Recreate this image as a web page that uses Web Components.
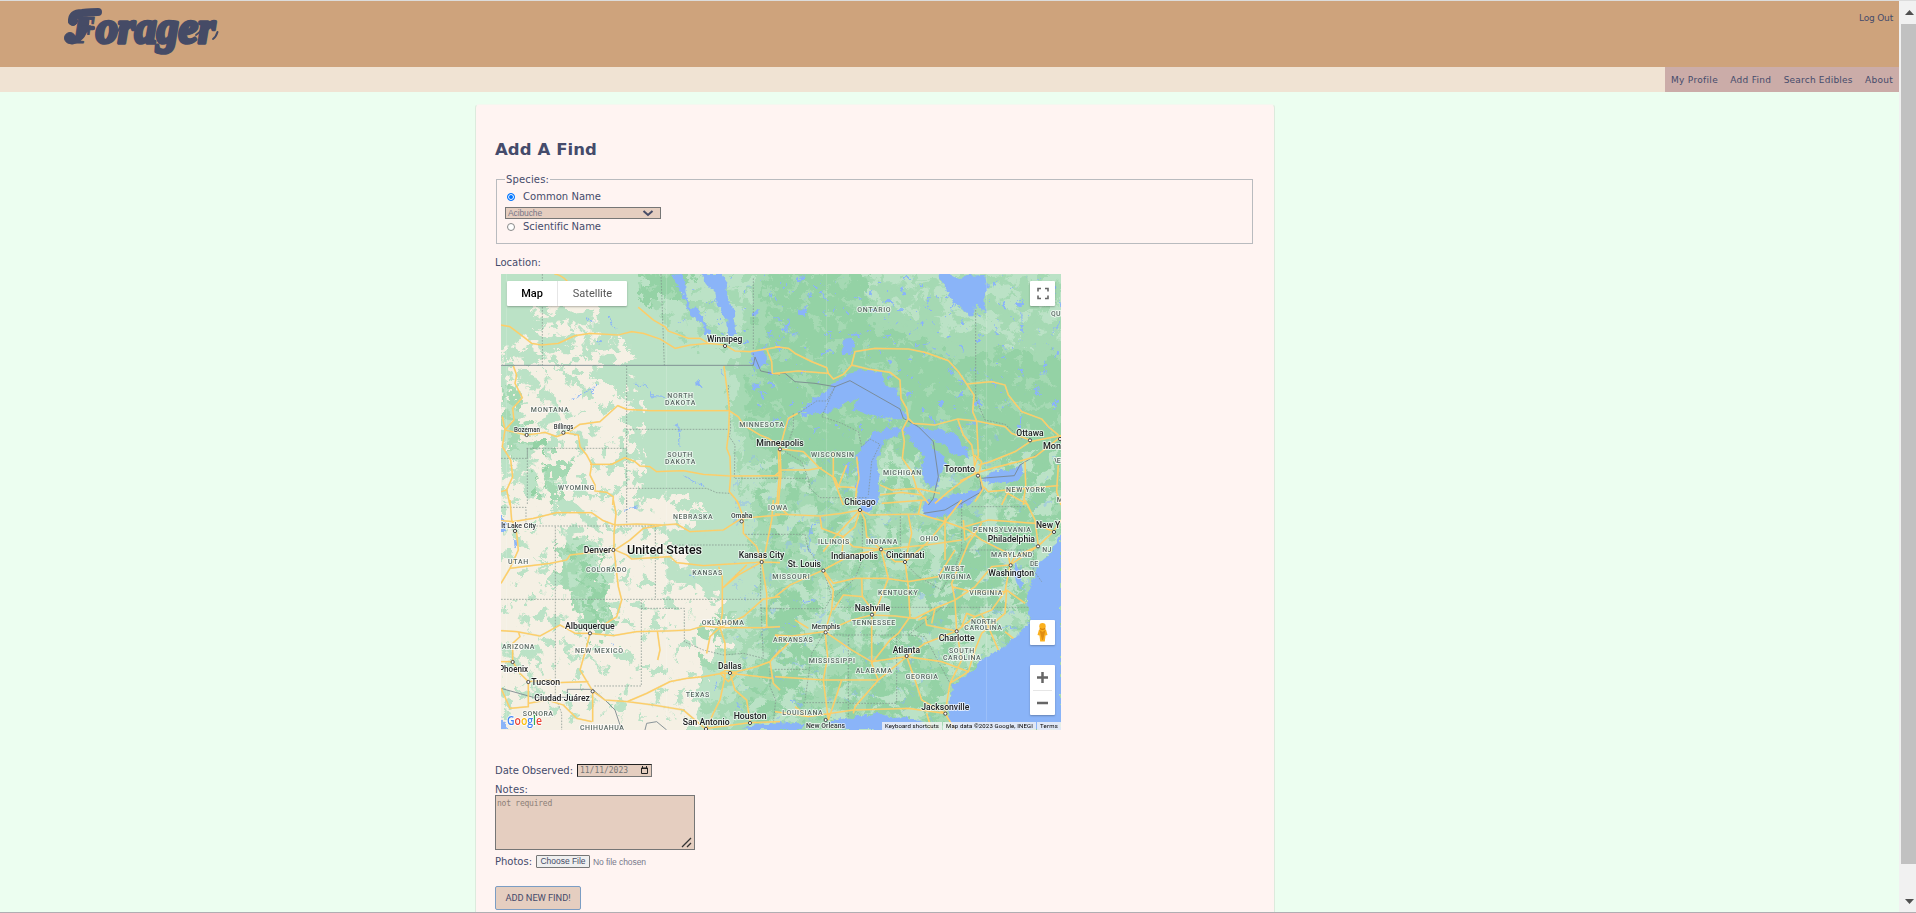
<!DOCTYPE html>
<html lang="en">
<head>
<meta charset="utf-8">
<title>Forager</title>
<style>
html,body{margin:0;height:913px;overflow:hidden;background:#ecfef0;color:#454b6b;font-family:"DejaVu Sans",Verdana,sans-serif;font-size:10px}
</style>
</head>
<body>
<forager-app></forager-app>
<script>
class FitText extends HTMLElement{
  connectedCallback(){
    const r=this.attachShadow({mode:'open'});
    r.innerHTML='<style>:host{display:inline-block;white-space:nowrap;line-height:1}</style><slot></slot>';
    const n=this.textContent.length,want=+this.getAttribute('w');
    const w=this.getBoundingClientRect().width;
    this.style.letterSpacing=((want-w)/n)+'px';
  }
}
customElements.define('fit-text',FitText);

class AppHeader extends HTMLElement{
  connectedCallback(){
    this.attachShadow({mode:'open'}).innerHTML=`<style>
    :host{display:block;border-top:1px solid #dcdcdc}
    .top{height:66px;background:#cea37c;display:flex;justify-content:space-between}
    svg{display:block;margin-left:56px;overflow:visible}
    a{color:inherit;text-decoration:none}
    .out{padding:12px 6px 0 0;font-size:9px}
    nav{height:25px;background:#f0e3d3;display:flex;justify-content:flex-end;font-size:9px}
    .links{width:234px;box-sizing:border-box;padding:0 6px 0 6px;background:#cbaca8;display:flex;align-items:center;justify-content:space-between}
    </style>
    <div class="top"><svg width="220" height="66" viewBox="56 1 220 66"><g fill="#454b66" stroke="#454b66" stroke-linejoin="round" stroke-linecap="round">
    <g fill="none"><path stroke-width="8" d="M72 21Q72 13 82 13Q92 12 98 12"/><path stroke-width="7" d="M86 20Q85 38 72 41"/><path stroke-width="4.500" d="M82 28H93"/></g>
    <circle cx="73" cy="21" r="4.500"/><circle cx="70" cy="38" r="5.500"/>
    <path fill="none" stroke-width="2" d="M108 38Q117 36 121 25M196 35Q203 30 205 24M213 39Q216 37 217.500 32"/>
    <g font-family="Liberation Serif" font-weight="700" font-style="italic" stroke-width="3.600"><text y="42.500" x="72" font-size="46"><tspan textLength="23" lengthAdjust="spacingAndGlyphs" stroke-width="1" font-size="40">F</tspan><tspan x="96" textLength="119" lengthAdjust="spacingAndGlyphs">orager</tspan></text></g></g></svg>
    <div class="out"><a href="#"><fit-text w="34">Log Out</fit-text></a></div></div>
    <nav><div class="links"><a href="#"><fit-text w="47">My Profile</fit-text></a><a href="#"><fit-text w="41">Add Find</fit-text></a><a href="#"><fit-text w="69">Search Edibles</fit-text></a><a href="#"><fit-text w="28">About</fit-text></a></div></nav>`;
  }
}
customElements.define('app-header',AppHeader);

class ScrollRail extends HTMLElement{
  connectedCallback(){
    this.attachShadow({mode:'open'}).innerHTML=`<style>
    :host{display:flex;flex-direction:column;width:17px;height:913px;box-sizing:border-box;background:#f1f1f1;border-top:1px solid #dcdcdc}
    .thumb{height:840px;margin-left:2px;background:#c1c1c1}
    svg{display:block}
    </style><svg width="17" height="23"><path d="M6 14h9l-4.500-5z" fill="#505050"/></svg><div class="thumb"></div><svg width="17" height="48"><path d="M6 35h9l-4.500 5z" fill="#505050"/></svg>`;
  }
}
customElements.define('scroll-rail',ScrollRail);

/* Each tile keeps its own origin; one map pixel is three tile units. */
const TILES=[
{o:[490,265],
 water:'M630 27H695L712 50L708 85L722 110L735 145L738 210L715 212L712 170L695 140L680 115L672 80L648 58ZM545 30L575 27L590 50L583 75L598 125L625 130L640 170L655 190L665 210L645 210L635 175L605 150L590 125L575 80L560 60ZM788 262L825 255L830 300L800 310L785 295ZM785 360L812 352L810 365L790 375ZM618 345L642 362L620 362ZM320 226L335 230L330 236Z',
 streams:'M245 402L275 385L310 370L310 390M310 370L330 358M430 358L462 358L480 375L485 392L530 394M355 150L375 190M560 475L568 500L570 545M690 315L700 330M580 630L640 665M285 160L310 170',
 road:'M33 180L60 185L100 215L125 235L155 240L205 235L255 212L300 205L385 210L425 200L460 205L510 222L555 250L600 240L655 235L705 240L735 258L780 260L830 252L870 245M445 127L490 165L525 185L535 198L595 220L630 220L655 235M193 27Q215 30 233 50M70 303L80 330L75 355L97 398L68 430L72 465L45 495L37 545L62 585L68 635L50 675L60 720M37 455L45 495L110 510L165 502L200 515L235 502L270 478L330 470L383 422L410 433L480 437L718 437L745 455L760 480L810 510L835 520L870 545M222 503L265 510L270 545L290 570L305 598L300 630L315 660L315 678L350 682L370 695L368 720M300 598L365 598L405 578L435 590L450 603L480 605L500 620L580 617L640 628L720 633L870 632M702 303L708 350L715 400L718 437L716 500L710 550L720 575L722 633L718 680L735 700L748 720M830 252L845 290L847 325L870 327M865 555L868 632L860 720M33 680L50 675',
 solid:'M33 301H790L795 276L812 318L870 330',
 dash:'M157 27V301M513 27L523 301M790 40V275M410 301V720M410 493H718M110 550H410M112 550V720M33 580H112V550M410 670H650L680 683L720 685L735 700M715 360L718 437L722 490L718 515L735 540L733 640H870',
 big:[['Winnipeg',651,757,231],['Minneapolis',799,941,542]],
 mid:[['Bozeman',72,150,500],['Billings',191,250,492]],
 st:[['NORTH',532,609,399],['DAKOTA',525,616,420],['MONTANA',122,236,442],['MINNESOTA',748,882,486],['SOUTH',532,607,577],['DAKOTA',525,616,598],['WYOMING',204,313,676]],
 dots:[[705,243],[110,510],[220,503]]},
{o:[775,265],
 water:'M487 27H520L555 45L575 30L632 27L640 70L628 100L632 145L610 120L600 115L598 145L588 155L568 140L558 125L530 112L515 70L500 50ZM205 222L230 218L238 240L230 270L205 270L200 245ZM70 445L100 415L130 390L165 370L185 345L205 338L230 320L275 315L320 322L330 360L370 372L376 410L385 440L395 460L345 460L310 452L270 445L228 432L250 402L215 410L165 440L155 452L140 445ZM290 505L330 492L360 487L378 495L365 512L330 525L320 545L305 590L310 620L312 680L308 720H250L245 660L247 610L255 570L280 530ZM240 578L285 515L305 510L280 545L247 590ZM378 490L410 478L450 492L500 495L545 510L560 540L580 560L585 580L560 575L530 565L510 540L490 530L470 520L475 550L505 575L510 600L485 665L465 668L450 650L438 600L445 575L420 545L405 520ZM620 645L650 620L700 615L740 600L745 625L720 648L650 655ZM460 720L500 700L530 690L585 680L630 668L600 700L560 720ZM210 600L240 590L222 600L220 640ZM860 160L836 205L844 180Z',
 streams:'M30 200L75 210M0 155L20 170M445 240L465 235M790 330L815 322M740 145L742 180M570 475L605 474M685 240L692 256M585 310L610 322M660 180L665 210',
 road:'M0 245L40 250L60 265L110 290L155 308L160 325M0 325L70 318L160 325L175 342L205 328L230 300L240 260L300 250L400 252L450 262L520 287L550 320L575 357L597 390L593 440L605 468M230 300L280 312L345 322L375 345L378 400L395 430L400 460L415 475L480 480L548 462L605 468L640 475L690 485L710 505L765 525M575 357L650 350L690 360L700 390L740 440L800 462L820 485L850 510M548 462L565 510L590 540L597 580L600 625M605 468L610 570L600 600M400 460L382 495L388 530L382 580L410 620L425 670M600 625L650 610L730 590L780 575L858 515M600 625L560 650L520 680L480 715M610 600L640 592L720 560L765 530L858 512M598 570L620 590L612 625L625 670M68 445L40 460L28 500L15 550L18 630L10 720M15 552L85 560L135 610L180 640L190 665L240 668M0 632L20 615L100 615L140 608M175 560V640L205 720M245 575L252 640L245 668L240 720M215 600L190 665M315 660L350 675L425 670L495 685M315 690L380 682L440 690M320 715L450 705M425 670L460 715M555 648L610 622M750 590L752 660L745 720M690 680L760 720M625 665L640 680L850 662M850 600L845 680L858 720M625 670L600 710M680 720L700 680',
 solid:'M0 325L30 325L60 350L120 355L180 365L225 347L375 432L385 460L430 485L475 530L490 635L475 700L460 720M550 720L620 680L615 640L718 632L735 600L800 560',
 dash:'M602 135V400L630 465L690 478L740 520M180 365L140 455L200 475L250 500L260 545L285 522L315 538L290 590L280 690M70 445L125 408L155 408L180 365M0 640H100L105 670L135 698H280M55 445V490L30 560L80 590L100 640M820 545L858 530',
 big:[['Toronto',508,600,621],['Ottawa',724,806,514],['Mon',804,858,551],['Chicago',208,302,720]],
 st:[['ONTARIO',247,347,140],['QU',828,857,153],['WISCONSIN',108,237,575],['MICHIGAN',324,439,629],['NEW YORK',693,810,682],['VE',838,857,593],['M',845,857,711]],
 dots:[[15,553],[609,632],[765,526],[855,522]]},
{o:[490,500],
 water:'M33 40L42 60L48 68L45 90L33 92ZM33 645L45 665L55 690H33ZM755 690L800 672L830 675L870 672V690ZM72 112L82 130L80 145L73 135Z',
 streams:'M405 28L440 20M365 430L370 440M680 545L675 570M600 225L620 235M740 610L755 635M790 255L800 265',
 road:'M33 62L70 65L130 55L200 38L305 38L340 62L375 75L440 72L520 75L560 72L600 95L700 90L755 55L870 45M370 0L378 40L372 100V150L380 220L385 260L395 300L380 350L340 375M375 150L420 120L460 85L520 75M375 150L410 165L425 177L540 170L560 188L640 197L750 190L815 186L870 188M33 250L60 205L100 200L180 190L230 180L240 165L300 158L372 150M60 0L65 60L80 100L85 150L60 205M33 392L80 395L150 408L210 375L255 400L300 400L370 407L440 395L530 393L600 390L640 378L690 383L820 383L870 380M502 393L510 450L503 480M300 400L290 440L270 510L308 573V665M85 395L90 410L68 430V485M33 485H68L90 520L115 545L180 540L205 548L295 545M115 545V620L60 625L33 565M115 610L170 600L220 615L260 655L305 665M308 573L345 600L412 605L470 580L540 545L590 535L640 530L695 520H720L850 535M412 605L490 615L580 630L650 690M740 0L760 50V100L800 140L815 186M686 200L697 230V340L690 383L660 410L650 460M690 383L705 430V530L690 600L670 640L650 685M697 265L770 195M697 265L745 225L815 186L830 280V383M690 383L760 350L820 297L870 290M720 520L735 570L770 600L780 665M720 520L800 500L840 485L870 450M650 685L780 668L870 665M850 0L845 60L820 186M840 485L850 550L870 570M690 520L715 545L740 520L710 510L690 520',
 solid:'M33 565L130 592H232V568H308L345 600L375 630L395 690M465 690L470 670L500 665L530 690',
 dash:'M196 80V590L215 640V690M33 22H108V78H496V298M33 298H815M454 298V558H310M454 325H583V425L640 450L700 465L760 460L820 475M540 135H795M410 0V78M765 103H870M812 186V300L820 475M812 325H870M840 485V560L857 600L850 670',
 us:[['United States',411,636,161]],
 big:[['Denver',281,363,158],['Kansas City',746,883,174],['Albuquerque',225,374,388],['Dallas',684,755,507],['Phoenix',27,114,515],['Tucson',124,210,554],['Ciudad Juárez',133,300,603],['Houston',731,830,657],['San Antonio',578,719,674]],
 mid:[['lt Lake City',34,138,83],['Omaha',723,787,55]],
 st:[['NEBRASKA',549,668,57],['UTAH',54,115,192],['COLORADO',288,410,215],['KANSAS',607,697,224],['OKLAHOMA',635,762,375],['ARIZONA',36,133,447],['NEW MEXICO',255,399,458],['TEXAS',587,658,590],['SONORA',98,189,649],['CHIHUAHUA',270,402,690],['IOWA',834,892,29]],
 dots:[[75,93],[370,150],[755,64],[815,186],[300,400],[68,486],[115,546],[308,574],[720,519],[780,669],[648,687]]},
{o:[775,500],
 water:'M858 100L830 155L800 180L775 225L755 290L758 320L762 365L735 400L715 415L690 440L665 455L620 480L590 515L560 535L535 560L525 590L520 640L528 690H858ZM0 665L60 670L160 665L250 648L320 640L350 655L400 650L440 665L460 690H0ZM715 210L725 250L740 268L745 250L728 205L722 180ZM245 0H305L290 30L262 38ZM445 0H600L560 20L520 45L470 55L445 35Z',
 land:'M80 690L90 665L130 658L175 670L215 690ZM758 285L750 270L765 225L780 215Z',
 streams:'M145 40L110 80L100 140L130 190M30 370L60 380M680 380L730 385M50 600L80 620M400 440L410 455M120 300L80 305',
 road:'M0 42L135 48L200 40L255 30L285 45L430 42L510 65L580 90L620 120M255 30L240 80L205 110L200 180L145 210L45 255L0 290M255 30L270 60L275 110L318 148M145 210L230 165L318 148L455 135L560 120M318 148L340 235L300 340M318 148L360 185L390 185L455 130L510 65M145 210L175 250L240 235L335 235L400 245L490 230L540 150M390 185L400 260L405 350L370 400L345 420L290 490M145 215L175 270L170 330L150 395L158 470L145 540L160 660M0 405L50 408L150 395L230 360L290 345L360 348L420 355L480 325L540 300L600 260L650 200L705 195M290 345V490L310 540L240 620L235 640M150 395L230 450L290 485L395 470L450 430L545 393L600 350L650 330L690 275L705 195M395 470L420 540L440 600L510 640M395 470L500 485L540 500L580 515M395 470L310 540L145 540L0 530M0 635L100 650L235 630L400 625L510 640L525 550L580 515L600 450L620 400L690 340L695 270L750 310M545 393L560 480L525 550M540 300L545 393M540 300L530 250L580 130L620 70M705 195L790 138L835 95L858 60M570 80L640 60L780 70L835 95M620 120L700 160L705 195M560 0L510 65M135 48L140 85L205 110M400 45L410 100L390 185M0 405L40 430L0 470M450 350L455 375L545 393M480 325L470 370M175 330L205 285L260 290M790 138L780 60L750 0M200 540L160 660M455 640L470 690M60 620L100 650M530 260L590 275L695 275M510 50V180M565 60L570 120L590 105M705 195L720 170L790 138M260 235L262 290L300 340M455 350L430 360M600 350L575 340L560 380M620 345L640 380L670 450M255 30L180 110L145 155M690 395L715 415M510 640L540 690M0 10L40 45M430 42L440 0M200 110L235 140L318 148M100 385L60 360',
 solid:'M445 40L510 30L560 0',
 dash:'M0 103H90L100 150L145 210L170 290L150 326H0M170 322H760M130 405H400M262 30V180L240 235L180 290M376 40V175M220 405V650M365 405V610H220M85 608H220M150 395L110 460L90 600M0 508H100M560 0V150H775M400 405L450 365L500 322M400 405L450 410L525 550M376 175L430 230L500 270L540 200L560 150M590 20H750M775 150V210L800 245',
 big:[['Indianapolis',168,309,178],['Cincinnati',333,448,174],['St. Louis',38,138,200],['Philadelphia',638,780,127],['New Y',783,856,84],['Washington',640,777,227],['Nashville',239,345,332],['Charlotte',491,599,423],['Atlanta',353,435,458],['Jacksonville',439,583,630]],
 mid:[['Memphis',110,195,388],['New Orleans',93,210,684]],
 st:[['ILLINOIS',129,223,131],['INDIANA',273,367,131],['OHIO',435,490,124],['PENNSYLVANIA',594,768,95],['MARYLAND',648,772,170],['DE',765,790,197],['NJ',802,829,157],['MISSOURI',-8,104,236],['WEST',508,568,214],['VIRGINIA',490,588,236],['KENTUCKY',309,428,284],['VIRGINIA',583,682,284],['TENNESSEE',231,361,375],['NORTH',588,663,371],['CAROLINA',568,681,391],['ARKANSAS',-6,113,427],['SOUTH',522,598,459],['CAROLINA',504,617,479],['MISSISSIPPI',101,240,489],['ALABAMA',242,351,518],['GEORGIA',392,489,536],['LOUISIANA',22,143,644]],
 dots:[[255,30],[318,148],[390,186],[145,212],[837,96],[789,139],[707,196],[291,344],[152,397],[545,394],[395,468],[511,641],[152,660]]}
];

class ForageMap extends HTMLElement{
  connectedCallback(){
    const each=(k,a)=>TILES.map(t=>t[k]?`<path transform="translate(${t.o}) scale(.333333)" d="${t[k]}" ${a}/>`:'').join('');
    const words=(k,a)=>TILES.map(t=>(t[k]||[]).map(([s,a1,b1,y])=>`<text x="${(t.o[0]+a1/3).toFixed(2)}" y="${(t.o[1]+y/3).toFixed(2)}" textLength="${((b1-a1)/3).toFixed(2)}" lengthAdjust="${k=='st'?'spacing':'spacingAndGlyphs'}" ${a}>${s}</text>`).join('')).join('');
    const noise=(id,f,seed,k,c)=>`<filter id="${id}" filterUnits="userSpaceOnUse" x="501" y="274" width="560" height="456" color-interpolation-filters="sRGB"><feTurbulence type="fractalNoise" baseFrequency="${f}" numOctaves="5" seed="${seed}" result="n"/><feColorMatrix in="n" values="0 0 0 0 0 0 0 0 0 0 0 0 0 0 0 ${k} 0 0 0 ${c}" result="a"/><feComposite in="SourceGraphic" in2="a" operator="in"/><feDisplacementMap in2="n" scale="14" xChannelSelector="G" yChannelSelector="B"/></filter>`;
    this.attachShadow({mode:'open'}).innerHTML=`<style>
    :host{display:block;position:relative;width:560px;height:456px;overflow:hidden;font-family:Roboto,sans-serif;color:#000}
    svg{display:block}
    .ctl{position:absolute;background:#fff;box-shadow:0 1px 2px #0004;border-radius:1px}
    .type{left:6px;top:7px;width:120px;height:25px;display:flex;font-size:11px;line-height:25px}
    .type b{font-weight:500;width:50px;text-align:center;border-right:1px solid #e6e6e6}.type span{flex:1;text-align:center;color:#565656}
    .full{right:6px;top:7px}.man{right:6px;top:346px}.zoom{right:6px;top:391px}
    .legal{position:absolute;right:0;bottom:0;height:8px;display:flex;gap:1px;font-size:6px;line-height:8px}
    .legal span{background:#f5f5f5cc;padding:0 3px}
    </style>
    <svg width="560" height="456" viewBox="501 274 560 456">
    <defs>${noise('n1','.055 .065',4,20,-11)}${noise('n2','.05 .06',11,20,-9.6)}${noise('n3','.07 .08',23,20,-10.4)}${noise('n4','.08',37,20,-12)}${noise('n5','.12',51,22,-15.6)}
    <filter id="rough" filterUnits="userSpaceOnUse" x="480" y="250" width="600" height="500"><feTurbulence type="fractalNoise" baseFrequency=".07" numOctaves="5" seed="8"/><feDisplacementMap in="SourceGraphic" scale="46" xChannelSelector="R" yChannelSelector="G"/></filter>
    <filter id="coast" filterUnits="userSpaceOnUse" x="480" y="250" width="600" height="500"><feTurbulence type="fractalNoise" baseFrequency=".18" numOctaves="3" seed="3" result="t"/><feDisplacementMap in="SourceGraphic" in2="t" scale="7" xChannelSelector="R" yChannelSelector="G"/></filter></defs>
    <rect x="501" y="274" width="560" height="456" fill="#bbe2c6"/>
    <g filter="url(#rough)">
      <path fill="#f5f0e4" d="M470 368L588 366L612 385L625 400L628 430L624 455L632 500L675 498L698 508L682 530L668 540L690 555L696 580L722 605L728 640L705 665L696 690L690 712L700 760H470Z"/>
      <path fill="#a5d9b3" d="M735 365L755 260H1090V760H715L740 690L745 640L765 600L755 540L750 470L738 430Z"/>
      <path fill="#94d2a5" d="M752 370L764 300L775 260L880 260L868 300L880 330L930 345L960 360L990 350L1090 352V440L1030 455L990 450L940 470L880 445L860 470L800 480L770 460L750 400ZM640 260L690 270L682 300L645 300ZM768 600L800 590L815 620L812 680L780 700L762 660ZM930 560L985 525L1040 480L1060 510L1015 545L1000 590L960 610L925 645L890 670L860 640L880 600ZM890 680L950 700L920 720L850 710ZM1000 455L1061 440V500L1010 495Z"/>
      <path fill="#bbe2c6" d="M870 260H1090V325L1010 345L960 330L935 335L900 310L865 295ZM820 590L842 600L815 650L803 700H790L812 640ZM1020 560L1035 600L990 650L955 675L940 660L975 620ZM735 510L770 520L760 600L740 620ZM885 455L925 460L920 490L885 495Z"/>
      <path fill="#a5d9b3" d="M748 478L870 480L885 560L860 575L770 580L755 540ZM553 460H566L560 500H545ZM560 540L580 535L600 570L610 640L590 645L575 600L558 580ZM505 375L512 390L530 440L522 470L505 450Z"/>
    </g>
    <path filter="url(#n4)" fill="#bbe2c6" d="M501 366H610L625 495L690 520L700 720H501Z"/>
    <path filter="url(#n1)" fill="#bbe2c6" d="M501 366H545L560 420L540 500H501ZM501 640L545 650L540 690L501 680Z"/>
    <path filter="url(#n2)" fill="#bbe2c6" d="M501 440L540 445L535 500L501 500ZM560 500L595 515L615 560L620 620L590 625L565 580ZM655 520L710 530L720 600L670 590Z"/>
    <path filter="url(#n3)" fill="#f5f0e4" d="M530 305L590 300L635 350L640 364H501V345L535 330ZM625 366L645 400L645 490L625 495Z"/>
    <path filter="url(#n3)" fill="#94d2a5" d="M565 545L600 545L610 620L590 630ZM640 274H700V305H640ZM530 440H545V500H530Z"/>
    <path filter="url(#n3)" fill="#a5d9b3" d="M625 274H770V350H690ZM725 365H770V500H740ZM700 610H760V730H700Z"/>
    <path filter="url(#n3)" fill="#94d2a5" d="M745 380L860 470L1061 440V730H760L735 690L780 590L750 480Z"/>
    <path filter="url(#n1)" fill="#bbe2c6" d="M740 440L870 470L1061 450V730H730L760 600Z"/>
    <path filter="url(#n2)" fill="#a5d9b3" d="M865 280L1061 274V345L960 345L870 325Z"/>
    <path filter="url(#n4)" fill="#a5d9b3" d="M760 275H1061V440H760Z"/>
    <path filter="url(#n5)" fill="#8ab4f8" d="M680 274H1061V430H765L745 350L680 330Z"/>
    <path filter="url(#n5)" fill="#8ab4f8" opacity=".4" d="M735 430H1061V730H735Z"/>
    <g filter="url(#coast)">${each('water','fill="#8ab4f8"')}${each('land','fill="#a5d9b3"')}${each('streams','fill="none" stroke="#8ab4f8" stroke-width="3"')}</g>
    <path d="M506.500 274V730M666.500 274V730M826.500 274V730M986.500 274V730" stroke="#fff" opacity=".15"/>
    ${each('dash','fill="none" stroke="#7f8f8a" stroke-width="2.600" stroke-dasharray="5 4" opacity=".8"')}
    ${each('solid','fill="none" stroke="#77858c" stroke-width="2.600"')}
    ${each('road','fill="none" stroke="#e8d48c" stroke-width="5.400" stroke-linejoin="round" opacity=".6"')}
    ${each('road','fill="none" stroke="#ffcd65" stroke-width="3.700" stroke-linejoin="round"')}
    ${TILES.map(t=>t.dots.map(([x,y])=>`<circle cx="${t.o[0]+x/3}" cy="${t.o[1]+y/3}" r="1.600" fill="#fff" stroke="#444"/>`).join('')).join('')}
    <g font-family="Roboto" paint-order="stroke" stroke-linejoin="round" stroke="#ffffffb0" stroke-width="2">
    ${words('st','font-size="7" font-weight="500" fill="#5b6964"')}
    ${words('mid','font-size="7.500" font-weight="500" fill="#33383a"')}
    ${words('big','font-size="8.800" font-weight="500" fill="#202124"')}
    ${words('us','font-size="12.500" font-weight="500" fill="#111"')}
    </g>
    <g font-family="Open Sans" font-weight="600" font-size="12" stroke="#fff" stroke-width="1.500" paint-order="stroke"><text x="507" y="725" textLength="35" lengthAdjust="spacingAndGlyphs"><tspan fill="#4285f4">G</tspan><tspan fill="#ea4335">o</tspan><tspan fill="#fbbc04">o</tspan><tspan fill="#4285f4">g</tspan><tspan fill="#34a853">l</tspan><tspan fill="#ea4335">e</tspan></text></g>
    </svg>
    <div class="ctl type"><b>Map</b><span>Satellite</span></div>
    <svg class="ctl full" width="25" height="25"><path d="M8 10.500V7.500H11M15 7.500H18V10.500M18 14.500V17.500H15M11 17.500H8V14.500" fill="none" stroke="#666" stroke-width="1.600"/></svg>
    <svg class="ctl man" width="25" height="25"><path d="M9 9.500Q12.500 8 16 9.500L17.500 15L15.500 15.500L14.800 21.500H10.200L9.500 15.500L7.500 15Z" fill="#fbb01e"/><path d="M9.500 10L12.500 12L15.500 10L13 20H12Z" fill="#e08d10"/><circle cx="12.500" cy="6.200" r="3.200" fill="#fbb01e"/><path d="M9.800 8.300Q12.500 10.500 15.200 8.300" fill="none" stroke="#d9860d" stroke-width="1.200"/></svg>
    <svg class="ctl zoom" width="25" height="50"><path d="M7 12.500H18M12.500 7V18M7 38H18" stroke="#666" stroke-width="2.500"/><path d="M3 25.500H22" stroke="#e6e6e6"/></svg>
    <div class="legal"><span><fit-text w="54">Keyboard shortcuts</fit-text></span><span><fit-text w="87">Map data ©2023 Google, INEGI</fit-text></span><span><fit-text w="18">Terms</fit-text></span></div>`;
  }
}
customElements.define('forage-map',ForageMap);

class FindForm extends HTMLElement{
  connectedCallback(){
    this.attachShadow({mode:'open'}).innerHTML=`<style>
    :host{display:block;width:800px;height:809px;box-sizing:border-box;border:1px solid #dcebdd;border-top-color:#f4f8f0;border-radius:4px 4px 0 0;background:#fff4f2;padding:0 20px 0 19px}
    h1{margin:0;padding-top:36px;height:31px;font-size:16.500px;line-height:17px}
    .species{height:65px;box-sizing:border-box;width:757px;margin:7px 0 0 1px;border:1px solid #b9bbbf;padding:0 8px}
    .legend{display:flex;width:44px;height:10px;margin-top:-5px;background:#fff4f2;padding-left:1px}
    .opt{display:flex;align-items:center;height:13px;gap:8px;margin-left:2px}
    .opt i{width:8px;height:8px;box-sizing:border-box;border:1px solid #888;border-radius:50%;background:#fff}
    .opt.on i{border-color:#0075ff;background:#0075ff;box-shadow:inset 0 0 0 1px #fff}
    .sel{display:flex;align-items:center;justify-content:space-between;width:156px;height:12px;box-sizing:border-box;margin:4px 0 1px;border:1px solid #767676;background:#e5cec0;padding:0 6px 0 2px;font:8.500px/10px "Liberation Sans";color:#777687}
    .loc{margin-top:13px;height:17px;line-height:11px}
    forage-map{margin-left:6px}
    .row{display:flex;align-items:center}
    .date{margin-top:34px;height:13px;gap:4px}
    .box{display:flex;align-items:center;justify-content:space-between;width:75px;height:13px;box-sizing:border-box;border:1px solid #767676;border-top-color:#222;border-left-color:#222;background:#e5cec0;padding:0 2px;font:8px "DejaVu Sans Mono";color:#777}
    .notes{margin-top:7px;height:11px}
    .area{width:200px;height:55px;box-sizing:border-box;border:1px solid #767676;background:#e5cec0;padding:4px 2px 1px 1px;font:8px "DejaVu Sans Mono";color:#8c8078;display:flex;justify-content:space-between}
    .area svg{align-self:flex-end}
    .photo{margin-top:5px;height:13px}
    .file{box-sizing:border-box;width:54px;height:13px;margin:0 3px 0 4px;border:1px solid #767676;border-radius:1px;background:#efefef;color:#454b66;font:8.500px/11px "Liberation Sans";text-align:center}
    .none{font:8.500px "Liberation Sans";color:#77788c}
    .submit{margin-top:18px;width:86px;height:24px;box-sizing:border-box;border:1px solid #7b9dc4;border-radius:2px;background:#e5cec0;display:flex;align-items:center;justify-content:center;font:9.300px Roboto;color:#454b6b}
    </style>
    <h1><fit-text w="102">Add A Find</fit-text></h1>
    <div class="species"><div class="legend"><fit-text w="43">Species:</fit-text></div>
      <div class="opt on" style="margin-top:5px"><i></i><fit-text w="78">Common Name</fit-text></div>
      <div class="sel"><fit-text w="34">Acibuche</fit-text><svg width="12" height="8"><path d="M1.500 2L6 6L10.500 2" fill="none" stroke="#454b66" stroke-width="2"/></svg></div>
      <div class="opt"><i></i><fit-text w="78">Scientific Name</fit-text></div></div>
    <div class="loc"><fit-text w="46">Location:</fit-text></div>
    <forage-map></forage-map>
    <div class="row date"><fit-text w="78">Date Observed:</fit-text><div class="box"><fit-text w="48">11/11/2023</fit-text><svg width="9" height="9"><path d="M1.500 2H7.500V7.500H1.500Z" fill="none" stroke="#222"/><path d="M1 2.500H8M2.500 0V2M6.500 0V2" stroke="#222"/></svg></div></div>
    <div class="notes"><fit-text w="33">Notes:</fit-text></div>
    <div class="area"><fit-text w="55">not required</fit-text><svg width="11" height="11"><path d="M1 10L10 1M6 10L10 6" stroke="#333" stroke-width="1.300"/></svg></div>
    <div class="row photo"><fit-text w="37">Photos:</fit-text><div class="file"><fit-text w="45">Choose File</fit-text></div><span class="none"><fit-text w="53">No file chosen</fit-text></span></div>
    <div class="submit"><fit-text w="65">ADD NEW FIND!</fit-text></div>`;
  }
}
customElements.define('find-form',FindForm);

class ForagerApp extends HTMLElement{
  connectedCallback(){
    this.attachShadow({mode:'open'}).innerHTML=`<style>
    :host{display:flex;width:1916px;height:913px;overflow:hidden;position:relative}
    main{width:1899px;height:913px}
    find-form{margin:12px 0 0 475px}
    .edge{position:absolute;left:0;right:0;bottom:0;height:1px;background:#b0aeb2}
    </style><main><app-header></app-header><find-form></find-form></main><scroll-rail></scroll-rail><div class="edge"></div>`;
  }
}
customElements.define('forager-app',ForagerApp);
</script>
</body>
</html>
